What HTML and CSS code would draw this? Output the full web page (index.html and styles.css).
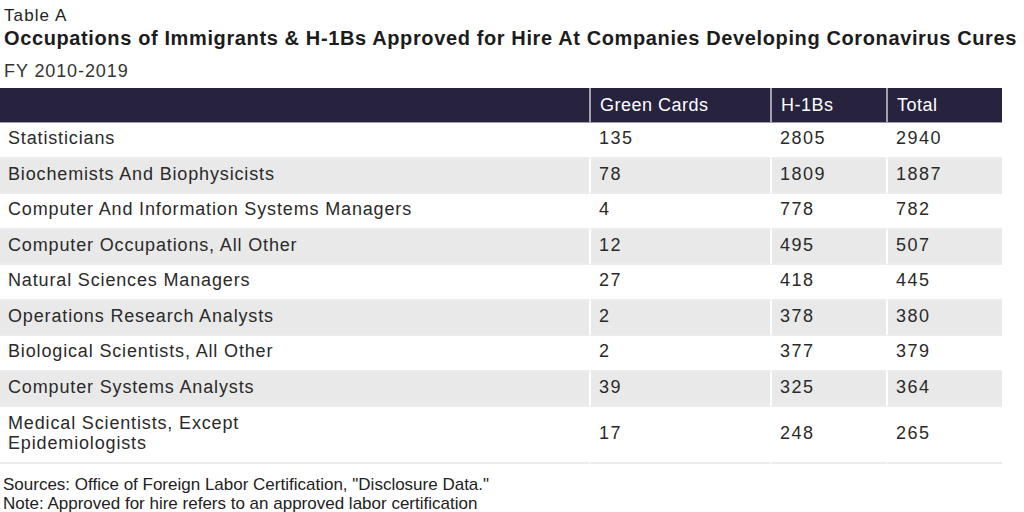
FILE: index.html
```html
<!DOCTYPE html>
<html>
<head>
<meta charset="utf-8">
<link rel="stylesheet" href="styles.css">
</head>
<body>
<div class="heading">
  <div class="label">Table A</div>
  <h1 class="title">Occupations of Immigrants &amp; H-1Bs Approved for Hire At Companies Developing Coronavirus Cures</h1>
  <div class="subtitle">FY 2010-2019</div>
</div>
<table class="data">
  <colgroup>
    <col class="c-name"><col class="c-gc"><col class="c-h1"><col class="c-tot">
  </colgroup>
  <thead>
    <tr><th></th><th>Green Cards</th><th>H-1Bs</th><th>Total</th></tr>
  </thead>
  <tbody>
    <tr><td>Statisticians</td><td class="num">135</td><td class="num">2805</td><td class="num">2940</td></tr>
    <tr class="alt"><td>Biochemists And Biophysicists</td><td class="num">78</td><td class="num">1809</td><td class="num">1887</td></tr>
    <tr><td>Computer And Information Systems Managers</td><td class="num">4</td><td class="num">778</td><td class="num">782</td></tr>
    <tr class="alt"><td>Computer Occupations, All Other</td><td class="num">12</td><td class="num">495</td><td class="num">507</td></tr>
    <tr><td>Natural Sciences Managers</td><td class="num">27</td><td class="num">418</td><td class="num">445</td></tr>
    <tr class="alt"><td>Operations Research Analysts</td><td class="num">2</td><td class="num">378</td><td class="num">380</td></tr>
    <tr><td>Biological Scientists, All Other</td><td class="num">2</td><td class="num">377</td><td class="num">379</td></tr>
    <tr class="alt"><td>Computer Systems Analysts</td><td class="num">39</td><td class="num">325</td><td class="num">364</td></tr>
    <tr class="tall"><td>Medical Scientists, Except<br>Epidemiologists</td><td class="num">17</td><td class="num">248</td><td class="num">265</td></tr>
  </tbody>
</table>
<div class="notes">
  <div>Sources: Office of Foreign Labor Certification, "Disclosure Data."</div>
  <div>Note: Approved for hire refers to an approved labor certification</div>
</div>
</body>
</html>
```
FILE: styles.css
```css
html, body {
  margin: 0;
  padding: 0;
  background: #ffffff;
}
body {
  font-family: "Liberation Sans", Arial, sans-serif;
  color: #222222;
}
.heading {
  padding: 6px 0 0 4px;
}
.label {
  font-size: 17px;
  line-height: 20px;
  letter-spacing: 1.1px;
}
.title {
  margin: 0;
  font-size: 20px;
  line-height: 24px;
  font-weight: bold;
  letter-spacing: 0.62px;
  color: #1c1c1c;
  white-space: nowrap;
}
.subtitle {
  margin-top: 10px;
  font-size: 18px;
  line-height: 22px;
  letter-spacing: 0.9px;
  color: #333333;
}
.data {
  margin-top: 6px;
  width: 1002px;
  border-collapse: separate;
  border-spacing: 0;
  table-layout: fixed;
  font-size: 18px;
}
.c-name { width: 589px; }
.c-gc { width: 181px; }
.c-h1 { width: 116px; }
.c-tot { width: 116px; }
.data th {
  background: #27233e;
  color: #ffffff;
  font-weight: normal;
  text-align: left;
  height: 34px;
  padding: 0 0 0 9px;
  letter-spacing: 0.5px;
  border-bottom: 1px solid #9e9bad;
}
.data th + th {
  border-left: 2px solid #a3a0b2;
}
.data td {
  padding: 6px 0 8.5px 8px;
  line-height: 19px;
  letter-spacing: 0.85px;
  border-bottom: 2px solid #ececec;
  color: #2a2a2a;
  vertical-align: middle;
}
.data td.num {
  letter-spacing: 1.5px;
}
.data td + td {
  border-left: 2px solid #ffffff;
}
.data tr.alt td {
  background: #e9e9e9;
}
.data tr.tall td {
  line-height: 20px;
  padding-top: 6px;
  padding-bottom: 9px;
}
.notes {
  margin-top: 11px;
  padding-left: 3px;
  font-size: 17px;
  line-height: 19px;
  color: #222222;
}
```
